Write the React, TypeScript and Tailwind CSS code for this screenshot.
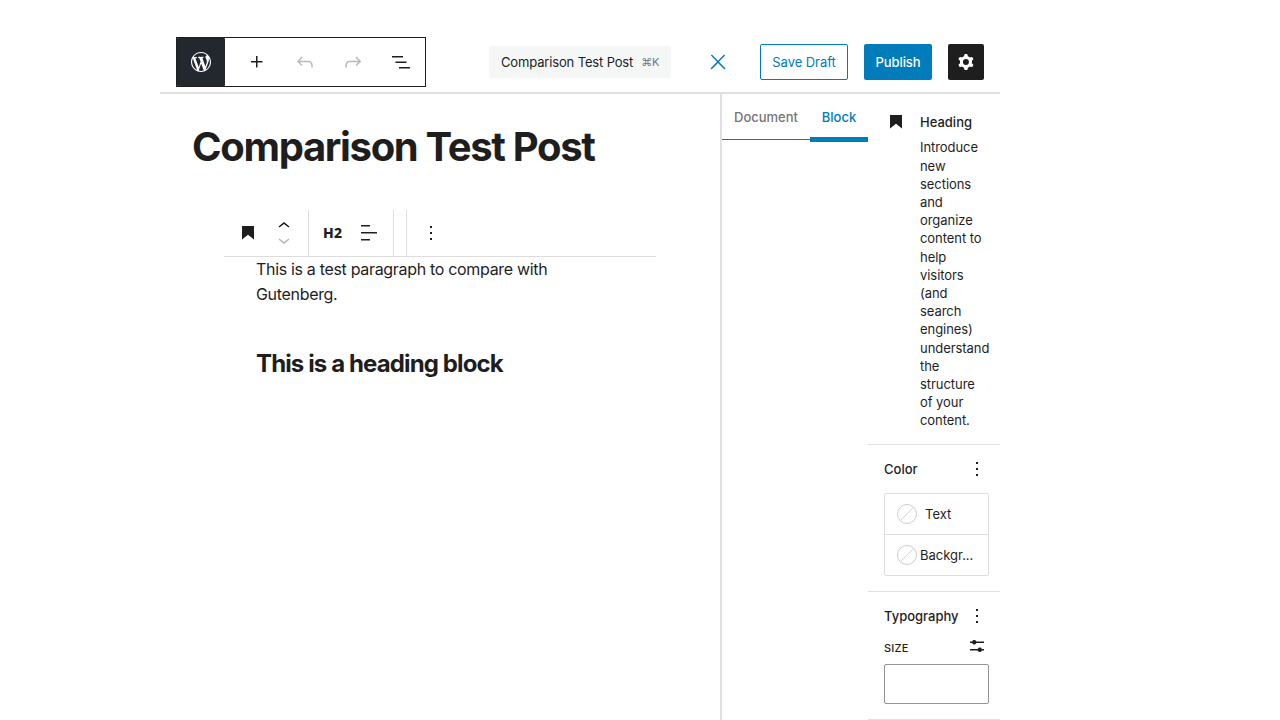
import type { ReactNode } from "react";

type IconProps = { d: string; className?: string; viewBox?: string };

function Icon({ d, className = "", viewBox = "0 0 24 24" }: IconProps) {
  return (
    <svg viewBox={viewBox} className={`size-6 shrink-0 fill-current ${className}`} aria-hidden="true">
      <path d={d} fillRule="evenodd" clipRule="evenodd" />
    </svg>
  );
}

const icons = {
  wordpress:
    "M20 10c0-5.51-4.49-10-10-10C4.48 0 0 4.49 0 10c0 5.52 4.48 10 10 10 5.51 0 10-4.48 10-10zM7.78 15.37L4.37 6.22c.55-.02 1.17-.08 1.17-.08.5-.06.44-1.13-.06-1.11 0 0-1.45.11-2.37.11-.18 0-.37 0-.58-.01C4.12 2.69 6.87 1.11 10 1.11c2.33 0 4.45.87 6.05 2.34-.68-.11-1.65.39-1.65 1.58 0 .74.45 1.36.9 2.1.35.61.55 1.36.55 2.46 0 1.49-1.4 5-1.4 5l-3.03-8.37c.54-.02.82-.17.82-.17.5-.05.44-1.25-.06-1.22 0 0-1.44.12-2.38.12-.87 0-2.33-.12-2.33-.12-.5-.03-.56 1.2-.06 1.22l.92.08 1.26 3.41zM17.41 10c.24-.64.74-1.87.43-4.25.7 1.29 1.05 2.71 1.05 4.25 0 3.29-1.73 6.24-4.4 7.78.97-2.59 1.94-5.2 2.92-7.78zM6.1 18.09C3.12 16.65 1.11 13.53 1.11 10c0-1.3.23-2.48.72-3.59C3.25 10.3 4.67 14.2 6.1 18.09zm4.03-6.63l2.58 6.98c-.86.29-1.76.45-2.71.45-.79 0-1.57-.11-2.29-.33.81-2.38 1.62-4.74 2.42-7.1z",
  plus: "M11 12.5V17.5H12.5V12.5H17.5V11H12.5V6H11V11H6V12.5H11Z",
  undo: "M18.3 11.7c-.6-.6-1.4-.9-2.3-.9H6.7l2.9-3.3-1.1-1-4.5 5L8.5 16l1-1-2.7-2.7H16c.5 0 .9.2 1.3.5 1 1 1 3.4 1 4.5v.3h1.5v-.2c0-1.5 0-4.3-1.5-5.7z",
  redo: "M15.6 6.5l-1.1 1 2.9 3.3H8c-.9 0-1.7.3-2.3.9-1.4 1.5-1.4 4.2-1.4 5.6v.2h1.5v-.3c0-1.1 0-3.5 1-4.5.3-.3.7-.5 1.3-.5h9.2L14.5 15l1.1 1.1 4.6-4.6-4.6-5z",
  listView: "M3 6h11v1.5H3V6Zm3.5 5.5h11V13h-11v-1.5ZM21 17H10v1.5h11V17Z",
  close: "M13 11.8l6.1-6.3-1-1-6.1 6.2-6.1-6.2-1 1 6.1 6.3-6.5 6.7 1 1 6.5-6.6 6.5 6.6 1-1z",
  cog: "M10.289 4.836A1 1 0 0111.275 4h1.306a1 1 0 01.987.836l.244 1.466c.787.26 1.503.679 2.108 1.218l1.393-.522a1 1 0 011.216.437l.653 1.13a1 1 0 01-.23 1.273l-1.148.944a6.025 6.025 0 010 2.435l1.149.946a1 1 0 01.23 1.272l-.653 1.13a1 1 0 01-1.216.437l-1.394-.522c-.605.54-1.32.958-2.108 1.218l-.244 1.466a1 1 0 01-.987.836h-1.306a1 1 0 01-.986-.836l-.244-1.466a5.995 5.995 0 01-2.108-1.218l-1.394.522a1 1 0 01-1.217-.436l-.653-1.131a1 1 0 01.23-1.272l1.149-.946a6.026 6.026 0 010-2.435l-1.148-.944a1 1 0 01-.23-1.272l.653-1.131a1 1 0 011.217-.437l1.393.522a5.994 5.994 0 012.108-1.218l.244-1.466zM14.929 12a3 3 0 11-6 0 3 3 0 016 0z",
  heading: "M6 5V18.5911L12 13.8473L18 18.5911V5H6Z",
  chevronUp: "M6.5 12.4L12 8l5.5 4.4-.9 1.2L12 10l-4.5 3.6-1-1.2z",
  chevronDown: "M17.5 11.6L12 16l-5.5-4.4.9-1.2L12 14l4.5-3.6 1 1.2z",
  alignLeft: "M13 5.5H4V4h9v1.5Zm7 7H4V11h16v1.5Zm-7 7H4V18h9v1.5Z",
  more: "M13 19h-2v-2h2v2zm0-6h-2v-2h2v2zm0-6h-2V5h2v2z",
  sliders:
    "m19 7.5h-7.628c-.3089-.87389-1.1423-1.5-2.122-1.5-.97966 0-1.81309.62611-2.12197 1.5h-2.12803v1.5h2.12803c.30888.87389 1.14231 1.5 2.12197 1.5.9797 0 1.8131-.62611 2.122-1.5h7.628zM19 15h-2.128c-.3089-.8739-1.1423-1.5-2.122-1.5s-1.8131.6261-2.122 1.5h-7.628v1.5h7.628c.3089.8739 1.1423 1.5 2.122 1.5s1.8131-.6261 2.122-1.5h2.128z",
};

function ToolButton({ d, muted = false }: { d: string; muted?: boolean }) {
  return (
    <button className={`flex w-12 items-center justify-center ${muted ? "text-[#b9b9b9]" : ""}`}>
      <Icon d={d} />
    </button>
  );
}

function PanelHeader({ title }: { title: string }) {
  return (
    <div className="flex h-6 items-center justify-between">
      <h2 className="pt-0.5 font-medium">{title}</h2>
      <button className="-mr-1">
        <Icon d={icons.more} />
      </button>
    </div>
  );
}

function ColorRow({ children, gap }: { children: ReactNode; gap: string }) {
  return (
    <button className={`flex w-full items-center py-2.5 pl-3 text-left ${gap}`}>
      <svg viewBox="0 0 20 20" className="size-5 shrink-0" fill="none" aria-hidden="true">
        <circle cx="10" cy="10" r="9.5" stroke="#cccccc" />
        <path d="M3.5 16.5 16.5 3.5" stroke="#d5d5d5" />
      </svg>
      <span className="leading-5">{children}</span>
    </button>
  );
}

function Header() {
  return (
    <header className="flex h-[70px] items-center border-b-2 border-[#e0e0e0] pl-4 pt-2">
      <div className="flex h-[50px] w-[250px] border border-[#1e1e1e]">
        <div className="flex w-12 items-center justify-center rounded-[1px] bg-[#23282e] text-white">
          <Icon d={icons.wordpress} viewBox="-2 -2 24 24" />
        </div>
        <div className="flex pl-2">
          <ToolButton d={icons.plus} />
          <ToolButton d={icons.undo} muted />
          <ToolButton d={icons.redo} muted />
          <ToolButton d={icons.listView} />
        </div>
      </div>
      <button className="ml-[63px] flex h-8 w-[182px] items-center rounded-[2px] bg-[#f5f7f7] pl-3 pt-px">
        <span className="tracking-[-0.15px]">Comparison Test Post</span>
        <span className="ml-2 text-[11px] tracking-[-0.3px] text-[#757575]">⌘K</span>
      </button>
      <button className="ml-[35px] text-[#007cba]">
        <Icon d={icons.close} />
      </button>
      <button className="ml-[30px] h-9 w-[88px] rounded-[2px] border border-[#007cba] pt-0.5 tracking-[-0.05px] text-[#007cba]">
        Save Draft
      </button>
      <button className="ml-4 h-9 w-[68px] rounded-[2px] bg-[#007cba] pt-0.5 font-medium tracking-[-0.1px] text-white">
        Publish
      </button>
      <button className="ml-4 flex size-9 items-center justify-center rounded-[2px] bg-[#1e1e1e] text-white">
        <Icon d={icons.cog} />
      </button>
    </header>
  );
}

function Canvas() {
  return (
    <main className="w-[560px] shrink-0 pl-8 pt-[29px]">
      <h1 className="whitespace-nowrap text-[40px] font-bold leading-[48px] tracking-[-1.33px]">
        Comparison Test Post
      </h1>
      <div className="ml-8 mt-[39px] flex h-[47px] w-[432px] border-b border-[#dddddd]">
        <div className="flex w-[85px] items-center border-r border-[#dddddd] pl-3">
          <Icon d={icons.heading} />
          <div className="ml-3 flex flex-col">
            <Icon d={icons.chevronUp} className="-mb-2.5" />
            <Icon d={icons.chevronDown} className="text-[#b5b5b5]" />
          </div>
        </div>
        <div className="flex w-[85px] items-center border-r border-[#dddddd] pl-[13px]">
          <span className="w-6 pb-0.5 pl-px font-['Noto_Sans',sans-serif] text-[14px] font-extrabold tracking-[0.4px]">
            H2
          </span>
          <Icon d={icons.alignLeft} className="ml-[11px]" />
        </div>
        <div className="w-[13px] border-r border-[#dddddd]" />
        <div className="flex items-center pl-3">
          <Icon d={icons.more} />
        </div>
      </div>
      <p className="ml-16 w-[368px] text-[16px] leading-[25.2px] tracking-[-0.32px]">
        This is a test paragraph to compare with
        <br />
        Gutenberg.
      </p>
      <h2 className="ml-16 mt-[39px] text-[24px] font-[650] leading-[36px] tracking-[-0.88px]">
        This is a heading block
      </h2>
    </main>
  );
}

function Sidebar() {
  return (
    <aside className="flex w-[280px] items-start border-l-2 border-[#e0e0e0]">
      <div className="flex h-12 w-[146px] font-medium">
        <button className="h-[46px] w-[88px] border-b border-[#007cba] pt-0.5 text-[#757575]">Document</button>
        <button className="h-12 w-[58px] border-b-[5px] border-[#007cba] pt-1 text-[#007cba]">Block</button>
      </div>
      <div className="w-[132px]">
        <section className="flex h-[351px] border-b border-[#e0e0e0] pl-4 pt-4">
          <Icon d={icons.heading} />
          <div className="ml-3">
            <h2 className="mt-[3px] font-medium leading-[19px]">Heading</h2>
            <p className="mt-[6.3px] w-[56px] leading-[18.2px] tracking-[-0.06px]">
              Introduce new sections and organize content&nbsp;to help visitors (and search engines) understand the
              structure of&nbsp;your content.
            </p>
          </div>
        </section>
        <section className="h-[147px] border-b border-[#e0e0e0] pl-4 pr-[15px] pt-3">
          <PanelHeader title="Color" />
          <div className="mt-3 w-[105px] divide-y divide-[#dddddd] rounded-[2px] border border-[#dddddd]">
            <ColorRow gap="gap-2">Text</ColorRow>
            <ColorRow gap="gap-[3px]">Backgr...</ColorRow>
          </div>
        </section>
        <section className="h-[128px] border-b border-[#e0e0e0] pl-4 pr-[15px] pt-3">
          <PanelHeader title="Typography" />
          <div className="mt-[6px] flex h-6 items-center justify-between">
            <span className="pt-[5px] text-[11px] font-medium tracking-[0.2px]">SIZE</span>
            <Icon d={icons.sliders} className="-mr-1" />
          </div>
          <input className="mt-[6px] block h-10 w-[105px] rounded-[2px] border border-[#949494]" />
        </section>
      </div>
    </aside>
  );
}

export default function App() {
  return (
    <div className="h-[720px] w-full overflow-hidden bg-white font-['Inter','Liberation_Sans',sans-serif] text-[13px] text-[#1e1e1e]">
      <div className="ml-40 mt-6 flex h-full w-[840px] flex-col">
        <Header />
        <div className="flex flex-1">
          <Canvas />
          <Sidebar />
        </div>
      </div>
    </div>
  );
}
